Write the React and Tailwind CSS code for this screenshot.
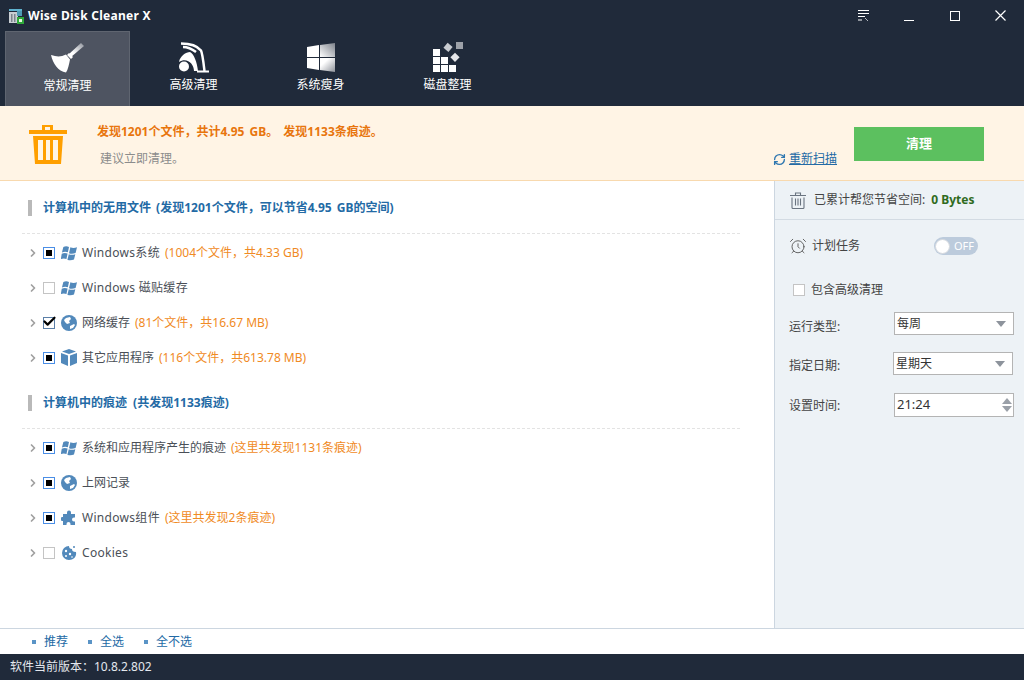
import React from 'react';
import { ChevronRight, RefreshCw, AlarmClock, Check } from 'lucide-react';

const font = 'font-["Noto_Sans","Noto_Sans_CJK_SC",sans-serif]';

function BroomIcon() {
  return (
    <svg width="34" height="32" viewBox="0 0 34 32">
      <defs>
        <linearGradient id="broom" x1="1" y1="0" x2="0" y2="1">
          <stop offset="0" stopColor="#8b9099" />
          <stop offset="0.7" stopColor="#ffffff" />
        </linearGradient>
      </defs>
      <path d="M30 1l3 3-13 11-2.500-2.500z" fill="url(#broom)" />
      <path d="M16 13l2-2 4 4-2 2z" fill="#ffffff" />
      <path d="M0 13c6 2 10 2 15-.500l4 5c-1 5-2 10-4 13C7 29 2 22 0 13z" fill="#ffffff" />
    </svg>
  );
}

function VacuumIcon() {
  return (
    <svg width="32" height="31" viewBox="0 0 32 31">
      <path d="M3 1.500c8 0 16 2 20 7 1.500 3 2.500 12 3.500 20.500" fill="none" stroke="#ffffff" strokeWidth="2.500" />
      <path d="M5 5c5 0 9 2 13 5" fill="none" stroke="#ffffff" strokeWidth="2.500" />
      <path d="M1 20c1-6 7-10 11-10 4 2 7 10 8 19h-4c0-7-7-14-15-9z" fill="#ffffff" />
      <circle cx="6" cy="24.500" r="5" fill="#ffffff" />
      <rect x="19" y="28.500" width="12" height="2" fill="#ffffff" />
    </svg>
  );
}

function WinTabIcon() {
  return (
    <svg width="28" height="29" viewBox="0 0 28 29">
      <defs>
        <linearGradient id="pane" x1="0" y1="1" x2="1" y2="0">
          <stop offset="0" stopColor="#ffffff" />
          <stop offset="1" stopColor="#7d828b" />
        </linearGradient>
        <linearGradient id="pane2" x1="0" y1="0" x2="1" y2="1">
          <stop offset="0.3" stopColor="#ffffff" />
          <stop offset="1" stopColor="#8d9199" />
        </linearGradient>
      </defs>
      <path d="M0 4l12-2v12H0z" fill="#ffffff" />
      <path d="M13 2l15-2v14H13z" fill="url(#pane)" />
      <path d="M0 15h12v12L0 25z" fill="#ffffff" />
      <path d="M13 15h15v14l-15-2z" fill="url(#pane2)" />
    </svg>
  );
}

function DefragIcon() {
  return (
    <svg width="30" height="30" viewBox="0 0 30 30">
      <g fill="#ffffff">
        <rect x="0" y="7" width="7" height="7" />
        <rect x="0" y="15" width="7" height="7" />
        <rect x="8" y="15" width="7" height="7" />
        <rect x="0" y="23" width="7" height="7" />
        <rect x="8" y="23" width="7" height="7" />
        <rect x="16" y="23" width="7" height="7" />
      </g>
      <rect x="12" y="2" width="6.500" height="6.500" fill="#c9ccd1" transform="rotate(40 15 5)" />
      <rect x="23" y="0" width="7" height="7" fill="#9da1a8" />
      <rect x="19" y="12" width="6.500" height="6.500" fill="#e6e7ea" transform="rotate(45 22 15)" />
    </svg>
  );
}

function AppLogo() {
  return (
    <svg width="16" height="16" viewBox="0 0 16 16">
      <rect x="1" y="1" width="13" height="2" fill="#5fb3cf" />
      <rect x="1" y="4" width="9" height="11" fill="#c9ced3" />
      <rect x="3" y="6" width="1.500" height="8" fill="#7c858c" />
      <rect x="6" y="6" width="1.500" height="8" fill="#7c858c" />
      <rect x="9" y="3" width="5" height="5" fill="#4d9ab5" />
      <rect x="9" y="9" width="7" height="7" fill="#2fa83a" />
      <rect x="11" y="11" width="3" height="3" fill="#e8f7e4" />
    </svg>
  );
}

function WinFlag() {
  return (
    <svg width="17" height="16" viewBox="0 0 17 16" fill="#5289bb">
      <path d="M2.500 1.500C4.500.500 6.500.500 8.500 1.500L7.300 7.300C5.300 6.500 3.300 6.500 1 7.500z" />
      <path d="M10 2c2 1 4.500 1 7 0l-1.500 6c-2.500 1-5 1-7 .200z" />
      <path d="M.800 8.700c2-1 4.200-1 6.200-.200L5.800 14.300c-2-.800-4-.800-6 .200z" />
      <path d="M8.300 9.200c2 .800 4.500.800 6.900 0l-1.400 5.800c-2.500 1-5 1-7 .200z" />
    </svg>
  );
}

function Globe() {
  return (
    <svg width="16" height="16" viewBox="0 0 16 16">
      <circle cx="8" cy="8" r="8" fill="#5289bb" />
      <path d="M5 3l4-1 1 2-2 2 1 2-3 1-2-2-1-2zM9 11l4-2 1 1-2 3-3 1z" fill="#ffffff" />
    </svg>
  );
}

function Box() {
  return (
    <svg width="16" height="17" viewBox="0 0 16 17" fill="#5289bb">
      <path d="M8 0l7 2.500L8 5 1 2.500z" />
      <path d="M0 4l7 2.500V17l-7-3z" />
      <path d="M16 4L9 6.500V17l7-3z" />
    </svg>
  );
}

function Puzzle() {
  return (
    <svg width="16" height="16" viewBox="0 0 16 16" fill="#5289bb">
      <path d="M6 2.500a2 2 0 0 1 4 0V4h4v3.500h-1a2 2 0 0 0 0 4h1V15H9.500v-1a2 2 0 0 0-4 0v1H2v-4H1a2.200 2.200 0 0 1 0-4h1V4h4z" />
    </svg>
  );
}

function Cookie() {
  return (
    <svg width="16" height="16" viewBox="0 0 16 16">
      <path d="M8 1c0 2 1 3 3 3 0 2 1 3 4 3 1 5-3 8-7 8a7 7 0 0 1 0-14z" fill="#5289bb" />
      <g fill="#ffffff">
        <circle cx="5" cy="6" r="1.200" />
        <circle cx="9" cy="9" r="1.200" />
        <circle cx="5" cy="11" r="1" />
        <circle cx="11" cy="12" r="0.800" />
      </g>
      <circle cx="13" cy="2" r="1" fill="#5289bb" />
    </svg>
  );
}

function TrashOutline() {
  return (
    <svg width="16" height="17" viewBox="0 0 16 17" fill="none" stroke="#6a7480" strokeWidth="1.100">
      <path d="M0 3.500h16M5.500 3.500V1h5v2.500" />
      <path d="M2 5.500v10c0 .600.400 1 1 1h10c.600 0 1-.400 1-1v-10" />
      <path d="M5.500 6.500v7M8 6.500v7M10.500 6.500v7" />
    </svg>
  );
}

function Tick({ state }) {
  if (state === 'off') {
    return <span className="w-3 h-3 bg-white border border-[#c4c4c4] shrink-0" />;
  }
  return (
    <span className={`w-3 h-3 bg-white border flex items-center justify-center shrink-0 ${state === 'on' ? 'border-[#5b7fa8]' : 'border-[#4a8ee6]'}`}>
      {state === 'some' && <span className="w-[6px] h-[6px] bg-black" />}
      {state === 'on' && <Check size={15} strokeWidth={3.500} className="text-black shrink-0 -mt-[3px]" />}
    </span>
  );
}

function Row({ state, icon, label, note, wide }) {
  return (
    <div className="h-[35px] flex items-center pl-[27px]">
      <ChevronRight size={12} strokeWidth={3.500} className="text-[#a0a0a0] mr-[4px]" />
      <Tick state={state} />
      <span className="w-[16px] ml-[6px] flex justify-center">{icon}</span>
      <span className={`ml-[5px] text-[#4a4f57] ${wide ? 'tracking-[0.3px]' : ''}`}>{label}</span>
      {note && <span className="ml-[5px] text-[#f08a24]">{note}</span>}
    </div>
  );
}

function Heading({ children, spacing }) {
  return (
    <div className={`h-[16px] flex items-center ml-[28px] border-l-[4px] border-[#b9b9b9] pl-[11px] font-bold text-[#236aa5] whitespace-pre ${spacing}`}>
      {children}
    </div>
  );
}

function Select({ value }) {
  return (
    <div className="w-[120px] h-[23px] bg-white border border-[#b4b4b4] flex items-center justify-between pl-[2px] pr-[7px] text-[#333]">
      {value}
      <span className="w-0 h-0 border-x-[5px] border-x-transparent border-t-[6px] border-t-[#8d939c]" />
    </div>
  );
}

const tabs = [
  { label: '常规清理', icon: <BroomIcon />, active: true },
  { label: '高级清理', icon: <VacuumIcon /> },
  { label: '系统瘦身', icon: <WinTabIcon /> },
  { label: '磁盘整理', icon: <DefragIcon /> },
];

export default function App() {
  return (
    <div className={`w-[1024px] h-[680px] flex flex-col overflow-hidden bg-white text-xs ${font}`}>
      {/* Title bar */}
      <div className="h-[31px] shrink-0 bg-[#202a3a] flex items-center pl-[8px] text-white">
        <AppLogo />
        <span className="ml-[4px] text-[12px] font-bold tracking-[0.28px]">Wise Disk Cleaner X</span>
        <div className="ml-auto flex items-center">
          <svg width="11" height="11" viewBox="0 0 11 11" className="mr-[35px]" stroke="#ffffff" fill="none">
            <path d="M0 .500h11M0 3.500h11M0 6.500h7M0 10h4" />
            <path d="M7 8l3 3" stroke="#b5b9bf" />
          </svg>
          <span className="w-[10px] h-px bg-white mt-[9px] mr-[36px]" />
          <span className="w-[10px] h-[10px] border border-white mr-[35px]" />
          <svg width="11" height="11" viewBox="0 0 11 11" className="mr-[18px]" stroke="#ffffff" strokeWidth="1.200">
            <path d="M.500.500l10 10M10.500.500l-10 10" />
          </svg>
        </div>
      </div>

      {/* Tabs */}
      <div className="h-[75px] shrink-0 bg-[#202a3a] flex pl-[5px]">
        {tabs.map((t) => (
          <div
            key={t.label}
            className={`flex flex-col items-center pt-[10px] text-white ${t.active ? 'w-[125px] bg-[#4e5461] border border-[#5f6570] border-b-0' : 'w-[127px]'}`}
          >
            <div className="h-[32px] flex items-center justify-center">{t.icon}</div>
            <span className="mt-[4px]">{t.label}</span>
          </div>
        ))}
      </div>

      {/* Banner */}
      <div className="h-[75px] shrink-0 bg-[#fff4e5] border-b border-[#f8d9ae] flex items-start">
        <svg width="40" height="40" viewBox="0 0 40 40" className="ml-[28px] mt-[18px]" fill="#ff9f00">
          <path d="M14 6V1h11v5h14v4H1V6zm3-3v3h5V3z" />
          <path d="M5 12h30l-2 28H7zm5 4v20h5V16zm8 0v20h4V16zm7 0v20h5V16z" fillRule="evenodd" />
        </svg>
        <div className="ml-[29px] pt-[18px]">
          <div className="font-bold text-[#e8750d] [word-spacing:2px]">发现1201个文件，共计4.95 GB。 发现1133条痕迹。</div>
          <div className="mt-[11px] ml-[3px] text-[#8c8c8c]">建议立即清理。</div>
        </div>
        <div className="ml-auto mr-[40px] flex items-end">
          <div className="flex items-center gap-[3px] text-[#236aa5] underline mb-[14px] mr-[17px]">
            <RefreshCw size={13} strokeWidth={2.500} className="text-[#2f77b0]" />
            重新扫描
          </div>
          <div className="w-[130px] h-[34px] mt-[21px] mb-[20px] bg-[#5cc05f] text-white font-bold text-[13px] flex items-center justify-center">清理</div>
        </div>
      </div>

      {/* Body */}
      <div className="flex-1 flex min-h-0">
        <div className="flex-1 pt-[19px]">
          <Heading spacing="[word-spacing:2px]">计算机中的无用文件 (发现1201个文件，可以节省4.95 GB的空间)</Heading>
          <div className="ml-[22px] mr-[34px] mt-[17px] mb-[1px] border-t border-dashed border-[#e3e3e3]" />
          <Row state="some" icon={<WinFlag />} label="Windows系统" note="(1004个文件，共4.33 GB)" wide />
          <Row state="off" icon={<WinFlag />} label="Windows 磁贴缓存" wide />
          <Row state="on" icon={<Globe />} label="网络缓存" note="(81个文件，共16.67 MB)" />
          <Row state="some" icon={<Box />} label="其它应用程序" note="(116个文件，共613.78 MB)" />
          <div className="h-[20px]" />
          <Heading spacing="[word-spacing:3px]">计算机中的痕迹 (共发现1133痕迹)</Heading>
          <div className="ml-[22px] mr-[34px] mt-[17px] mb-[1px] border-t border-dashed border-[#e3e3e3]" />
          <Row state="some" icon={<WinFlag />} label="系统和应用程序产生的痕迹" note="(这里共发现1131条痕迹)" />
          <Row state="some" icon={<Globe />} label="上网记录" />
          <Row state="some" icon={<Puzzle />} label="Windows组件" note="(这里共发现2条痕迹)" wide />
          <Row state="off" icon={<Cookie />} label="Cookies" wide />
        </div>

        {/* Sidebar */}
        <div className="w-[250px] shrink-0 bg-[#edf2f6] border-l border-[#ccd6e0] text-[#444]">
          <div className="h-[39px] border-b border-[#d3dbe3] flex items-center pl-[15px]">
            <TrashOutline />
            <span className="ml-[8px]">已累计帮您节省空间:</span>
            <span className="ml-[6px] font-bold text-[#2f6b1e]">0 Bytes</span>
          </div>
          <div className="h-[18px] mt-[17px] flex items-center pl-[14px]">
            <AlarmClock size={18} strokeWidth={1.200} className="text-[#555]" />
            <span className="ml-[5px]">计划任务</span>
            <div className="ml-[74px] w-[44px] h-[18px] rounded-full bg-[#bccbdc] flex items-center pl-[1px]">
              <span className="w-[15px] h-[15px] rounded-full bg-white border border-[#d5d9de]" />
              <span className="ml-[4px] text-[11px] text-white">OFF</span>
            </div>
          </div>
          <div className="flex items-center mt-[27px] pl-[18px]">
            <span className="w-3 h-3 bg-white border border-[#c4c4c4]" />
            <span className="ml-[6px]">包含高级清理</span>
          </div>
          <div className="flex items-center justify-between mt-[14px] pl-[14px] pr-[10px]">
            <span className="mt-[6px]">运行类型:</span>
            <Select value="每周" />
          </div>
          <div className="flex items-center justify-between mt-[17px] pl-[14px] pr-[11px]">
            <span className="mt-[5px]">指定日期:</span>
            <Select value="星期天" />
          </div>
          <div className="flex items-center justify-between mt-[18px] pl-[14px] pr-[10px]">
            <span className="mt-[2px]">设置时间:</span>
            <div className="w-[120px] h-[24px] bg-white border border-[#b4b4b4] flex items-center justify-between pl-[2px] pr-[1px] text-[13px] text-[#333]">
              21:24
              <span className="flex flex-col gap-[2px]">
                <span className="w-0 h-0 border-x-[5px] border-x-transparent border-b-[6px] border-b-[#9aa0a8]" />
                <span className="w-0 h-0 border-x-[5px] border-x-transparent border-t-[6px] border-t-[#9aa0a8]" />
              </span>
            </div>
          </div>
        </div>
      </div>

      {/* Bottom links */}
      <div className="h-[26px] shrink-0 bg-white border-t border-[#ccd6e0] flex items-center pl-[32px] gap-[20px] text-[#236aa5]">
        {['推荐', '全选', '全不选'].map((t) => (
          <span key={t} className="flex items-center gap-[8px]">
            <span className="w-[4px] h-[4px] bg-[#5a94c6]" />
            {t}
          </span>
        ))}
      </div>

      {/* Status bar */}
      <div className="h-[26px] shrink-0 bg-[#202a3a] flex items-center pl-[10px] text-[#e4e8ee]">
        软件当前版本：10.8.2.802
      </div>
    </div>
  );
}
